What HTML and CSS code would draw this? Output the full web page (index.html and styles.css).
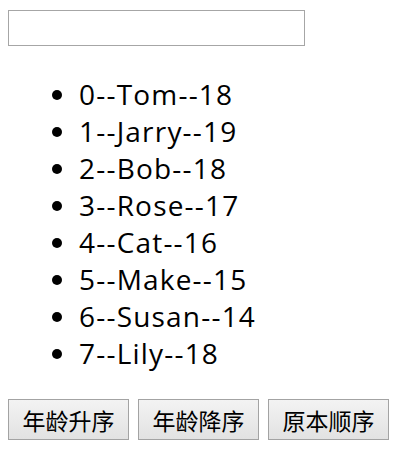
FILE: index.html
```html
<!DOCTYPE html>
<html lang="zh-CN">
<head>
    <meta charset="UTF-8">
    <title>列表排序</title>
    <link rel="stylesheet" href="styles.css">
</head>
<body>
    <input type="text" class="search-input">

    <ul class="person-list">
        <li>0--Tom--18</li>
        <li>1--Jarry--19</li>
        <li>2--Bob--18</li>
        <li>3--Rose--17</li>
        <li>4--Cat--16</li>
        <li>5--Make--15</li>
        <li>6--Susan--14</li>
        <li>7--Lily--18</li>
    </ul>

    <div class="sort-bar">
        <button class="sort-btn">年龄升序</button>
        <button class="sort-btn">年龄降序</button>
        <button class="sort-btn">原本顺序</button>
    </div>
</body>
</html>
```

FILE: styles.css
```css
body {
    margin: 8px;
    background: #fff;
    color: #000;
    font-family: "Open Sans", "Noto Sans CJK SC", sans-serif;
}

.search-input {
    display: block;
    box-sizing: border-box;
    width: 297px;
    height: 36px;
    margin: 2px 0 0;
    border: 1px solid #a6a6a6;
    padding: 0 6px;
    font-size: 20px;
    outline: none;
}

.person-list {
    margin: 30px 0 27px;
    padding-left: 71px;
    font-size: 28px;
    line-height: 37px;
    letter-spacing: 1.2px;
}

.sort-bar {
    display: flex;
    gap: 9px;
}

.sort-btn {
    box-sizing: border-box;
    width: 121px;
    height: 41px;
    padding: 0;
    border: 1px solid #a3a3a3;
    border-radius: 0;
    background: linear-gradient(#f3f3f3, #e2e2e2);
    font-family: "Noto Sans CJK SC", sans-serif;
    font-size: 23px;
    color: #000;
}
```
